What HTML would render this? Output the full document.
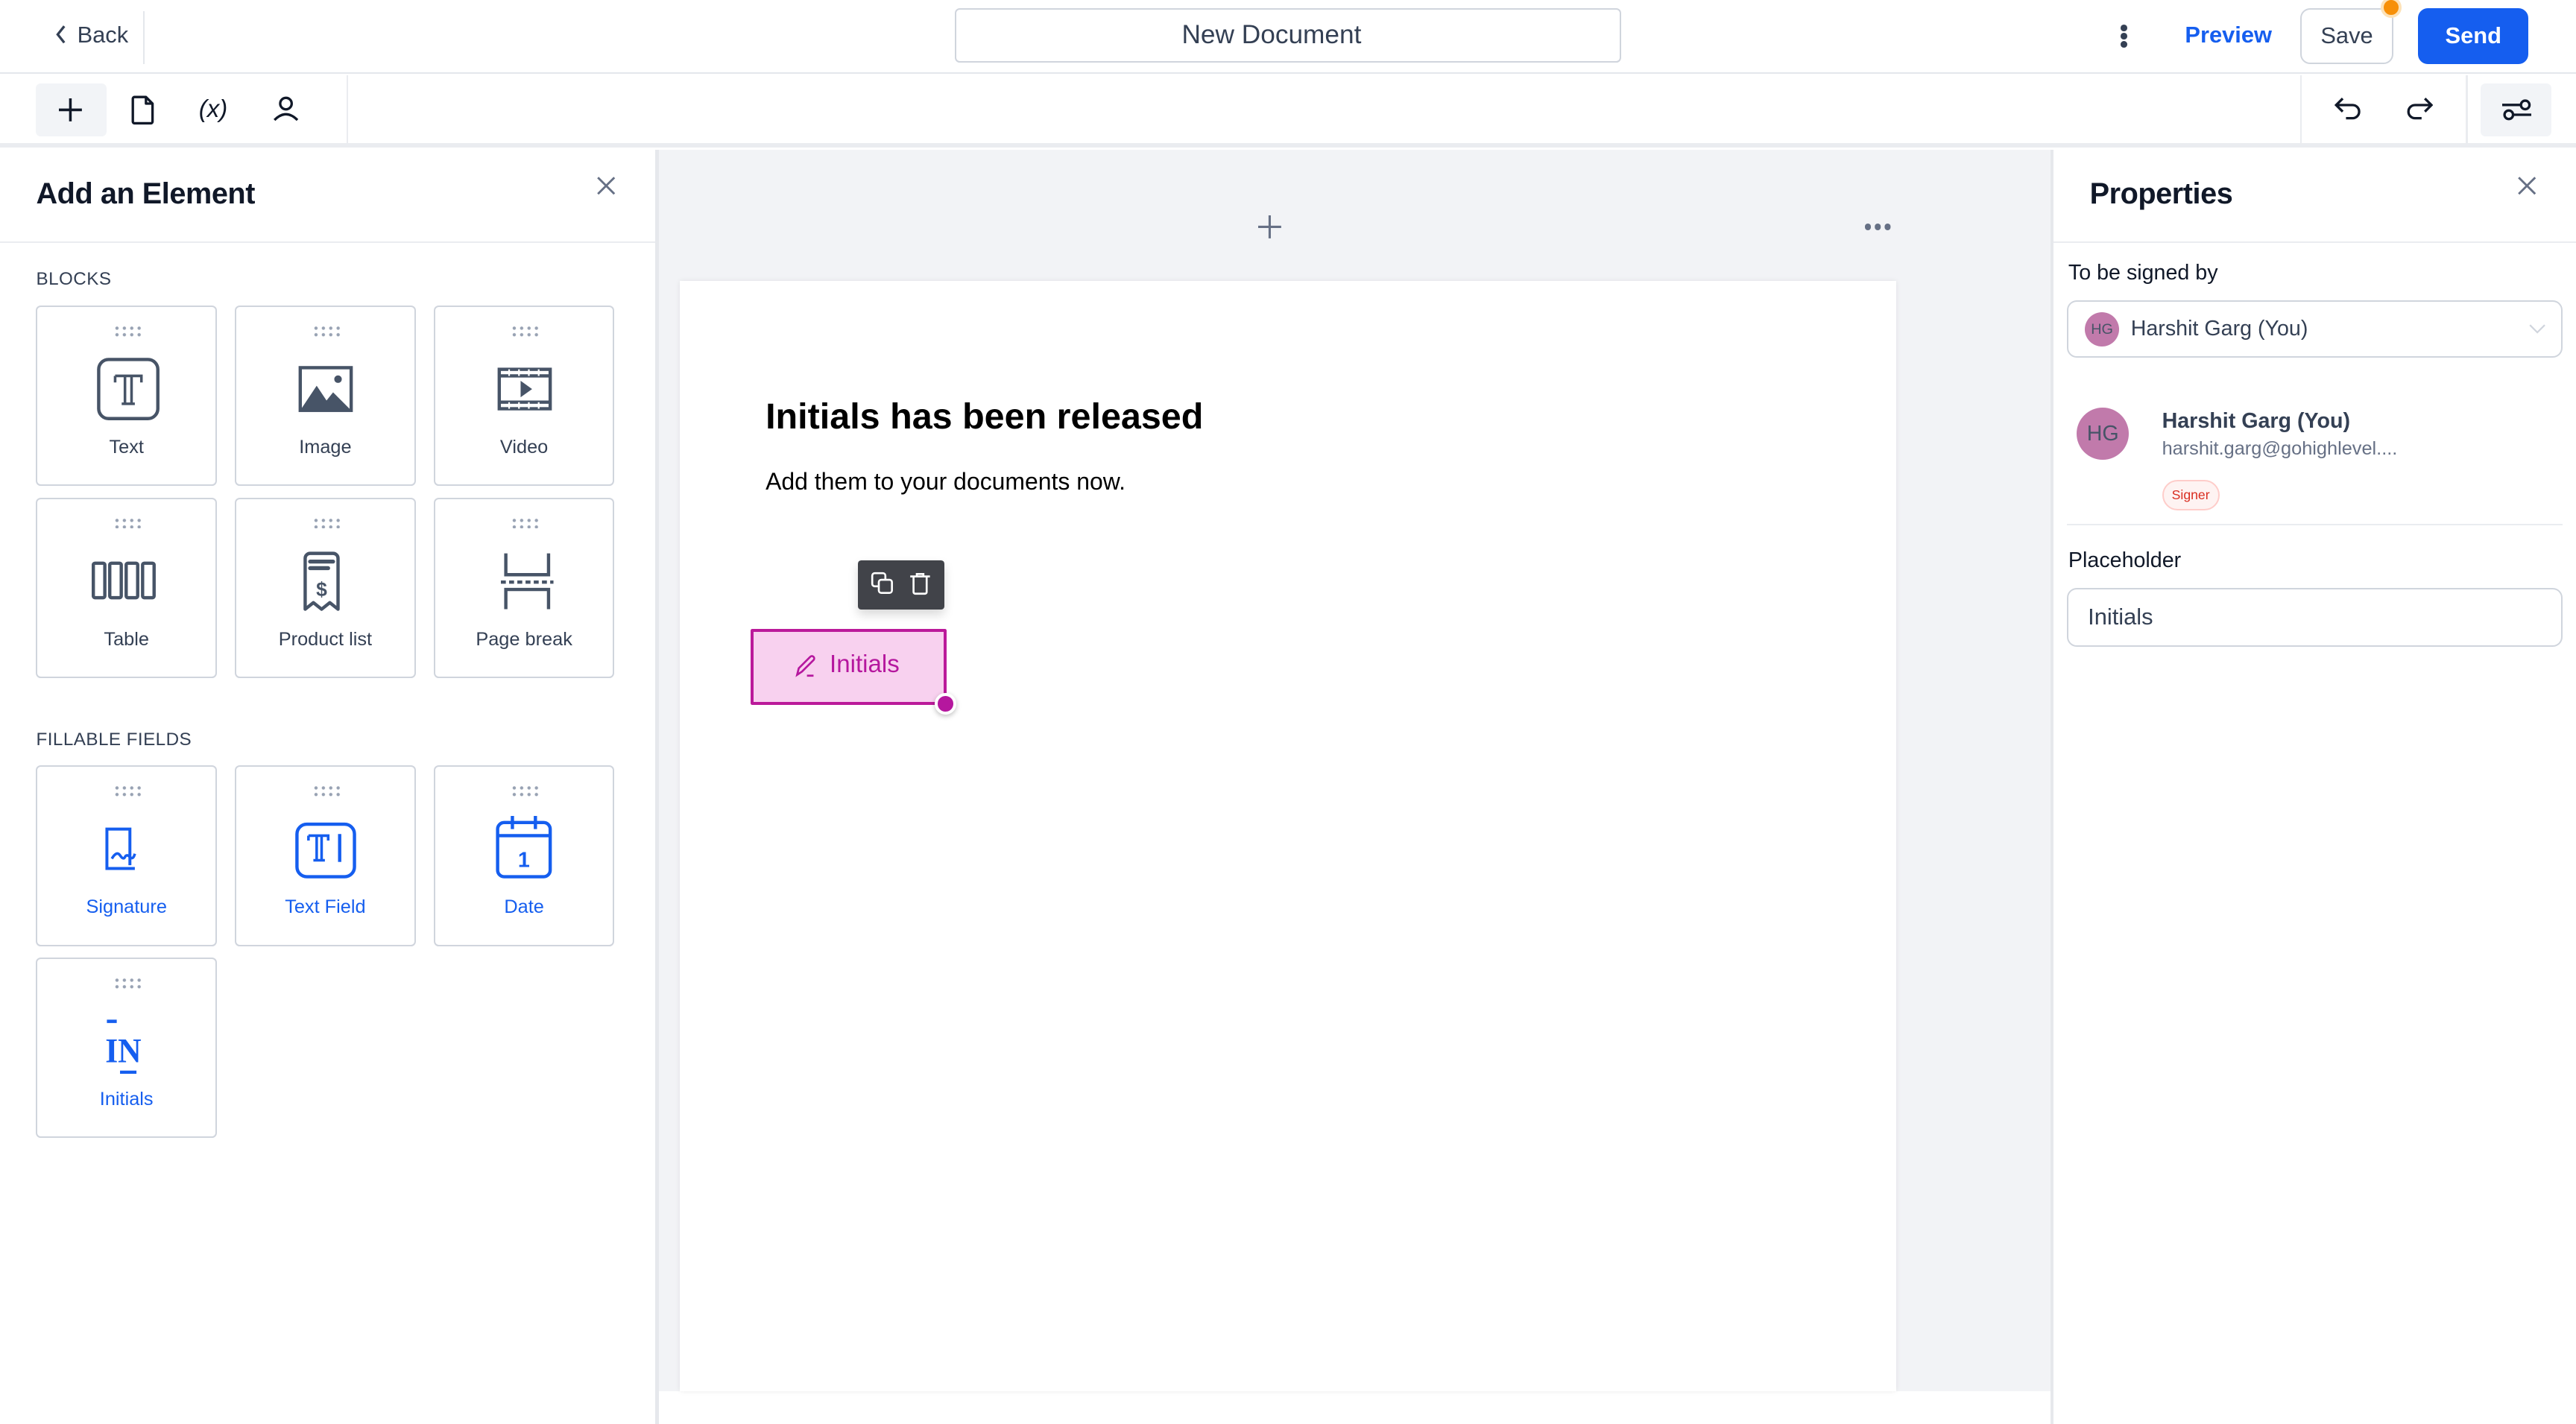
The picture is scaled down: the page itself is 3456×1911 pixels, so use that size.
<!DOCTYPE html>
<html><head><meta charset="utf-8"><style>
*{box-sizing:border-box;margin:0;padding:0}
html,body{width:3456px;height:1910px;overflow:hidden;background:#fff}
#r{position:absolute;left:0;top:0;width:1568px;height:867px;zoom:2.20408;font-family:"Liberation Sans",sans-serif;color:#101828}
.a{position:absolute}
.card{position:absolute;width:110px;height:110px;border:1px solid #d0d5dd;border-radius:3px;background:#fff}
.card .dots{position:absolute;left:46px;top:11px;width:18px;height:7px;background-image:radial-gradient(circle,#98a2b3 0.9px,transparent 1.1px);background-size:4.5px 4px}
.card .lb{position:absolute;left:0;right:0;top:79px;text-align:center;font-size:11.5px;color:#344054}
.card.f .lb{color:#155eef}
.card svg{position:absolute;left:35px;top:30px}
.lbl{font-size:11px;color:#344054;letter-spacing:.2px}
</style></head><body><div id="r">
<div class="a" style="left:0;top:0;width:1568px;height:45px;border-bottom:1px solid #e4e7ec"></div>
<svg class="a" style="left:33px;top:15px" width="8" height="12" viewBox="0 0 8 12"><path d="M6 1L2 6l4 5" fill="none" stroke="#344054" stroke-width="1.5"/></svg>
<div class="a" style="left:47px;top:13px;font-size:14px;color:#344054">Back</div>
<div class="a" style="left:87px;top:7px;width:1px;height:32px;background:#e4e7ec"></div>
<div class="a" style="left:581px;top:5px;width:406px;height:33px;border:1px solid #d0d5dd;border-radius:3px;text-align:center;line-height:31px;font-size:16px;color:#344054;padding-right:20px">New Document</div>
<div class="a" style="left:1291px;top:15px;width:4px;height:4px;border-radius:2px;background:#344054;box-shadow:0 5px 0 #344054,0 10px 0 #344054"></div>
<div class="a" style="left:1330px;top:13px;font-size:14px;font-weight:bold;color:#155eef">Preview</div>
<div class="a" style="left:1400px;top:5px;width:57px;height:34px;border:1px solid #d0d5dd;border-radius:6px;text-align:center;line-height:32px;font-size:14px;color:#344054">Save</div>
<div class="a" style="left:1449px;top:-2px;width:13px;height:13px;border-radius:50%;background:#f79009;border:2px solid #fde2b8"></div>
<div class="a" style="left:1472px;top:5px;width:67px;height:34px;border-radius:6px;background:#155eef;text-align:center;line-height:34px;font-size:14px;font-weight:bold;color:#fff">Send</div>
<div class="a" style="left:0;top:46px;width:1568px;height:44px;border-bottom:3px solid #eaecf0"></div>
<div class="a" style="left:22px;top:51px;width:43px;height:32px;border-radius:3px;background:#f2f4f7"></div>
<svg class="a" style="left:36px;top:60px" width="14" height="14"><path d="M7 0v14M0 7h14" stroke="#101828" stroke-width="1.6"/></svg>
<svg class="a" style="left:80px;top:58px" width="14" height="18" viewBox="0 0 14 18"><path d="M2 1h7l4 4v11a1 1 0 0 1-1 1H2a1 1 0 0 1-1-1V2a1 1 0 0 1 1-1zM9 1v4h4" fill="none" stroke="#101828" stroke-width="1.5" stroke-linejoin="round"/></svg>
<div class="a" style="left:121px;top:58px;font-size:15px;font-style:italic;color:#101828">(x)</div>
<svg class="a" style="left:166px;top:58px" width="16" height="16" viewBox="0 0 16 16"><circle cx="8" cy="5" r="3.5" fill="none" stroke="#101828" stroke-width="1.5"/><path d="M1 15q7-7 14 0" fill="none" stroke="#101828" stroke-width="1.5"/></svg>
<div class="a" style="left:211px;top:46px;width:1px;height:44px;background:#eaecf0"></div>
<div class="a" style="left:1400px;top:46px;width:1px;height:44px;background:#eaecf0"></div>
<div class="a" style="left:1501px;top:46px;width:1px;height:44px;background:#eaecf0"></div>
<svg class="a" style="left:1421px;top:59px" width="16" height="14" viewBox="0 0 16 14"><path d="M5 1L1 5l4 4M1 5h10a4 4 0 0 1 0 8H7" fill="none" stroke="#101828" stroke-width="1.5"/></svg>
<svg class="a" style="left:1465px;top:59px" width="16" height="14" viewBox="0 0 16 14"><path d="M11 1l4 4-4 4M15 5H5a4 4 0 0 0 0 8h4" fill="none" stroke="#101828" stroke-width="1.5"/></svg>
<div class="a" style="left:1510px;top:51px;width:43px;height:32px;border-radius:3px;background:#f2f4f7"></div>
<svg class="a" style="left:1523px;top:60px" width="18" height="14" viewBox="0 0 18 14"><path d="M0 4h12M6 10h12" stroke="#101828" stroke-width="1.5"/><circle cx="14" cy="4" r="2.6" fill="#f2f4f7" stroke="#101828" stroke-width="1.5"/><circle cx="4" cy="10" r="2.6" fill="#f2f4f7" stroke="#101828" stroke-width="1.5"/></svg>
<div class="a" style="left:400px;top:91px;width:850px;height:756px;background:#f2f3f6"></div>
<div class="a" style="left:399px;top:91px;width:2px;height:776px;background:#e6e8ec"></div>
<div class="a" style="left:1248px;top:91px;width:2px;height:776px;background:#e6e8ec"></div>
<svg class="a" style="left:766px;top:131px" width="14" height="14"><path d="M7 0v14M0 7h14" stroke="#667085" stroke-width="1.4"/></svg>
<div class="a" style="left:1135px;top:136px;width:4px;height:4px;border-radius:2px;background:#667085;box-shadow:6px 0 0 #667085,12px 0 0 #667085"></div>
<div class="a" style="left:414px;top:171px;width:740px;height:676px;background:#fff;box-shadow:0 0 3px rgba(0,0,0,.08)"></div>
<div class="a" style="left:466px;top:241px;font-size:22px;font-weight:bold;color:#000">Initials has been released</div>
<div class="a" style="left:466px;top:285px;font-size:14.5px;color:#000">Add them to your documents now.</div>
<div class="a" style="left:522px;top:341px;width:53px;height:30px;border-radius:2px;background:#414349;box-shadow:0 3px 6px rgba(0,0,0,.15)"></div>
<svg class="a" style="left:530px;top:348px" width="15" height="15" viewBox="0 0 15 15"><rect x="1" y="1" width="8" height="8" rx="1.5" fill="none" stroke="#fff" stroke-width="1.2"/><rect x="5" y="5" width="8" height="8" rx="1.5" fill="#414349" stroke="#fff" stroke-width="1.2"/></svg>
<svg class="a" style="left:553px;top:348px" width="14" height="15" viewBox="0 0 14 15"><path d="M1 3h12M5 3V1.5h4V3M3 3v9.5a1 1 0 0 0 1 1h6a1 1 0 0 0 1-1V3" fill="none" stroke="#fff" stroke-width="1.2"/></svg>
<div class="a" style="left:457px;top:383px;width:119px;height:46px;background:#f8d1ef;border:2px solid #bb1a9a;border-radius:1px"></div>
<svg class="a" style="left:483px;top:398px" width="15" height="15" viewBox="0 0 15 15"><path d="M2 13l1-4 7-7a1.4 1.4 0 0 1 2 2l-7 7zM8 13.5h4" fill="none" stroke="#b5179e" stroke-width="1.2"/></svg>
<div class="a" style="left:505px;top:396px;font-size:15px;color:#b5179e">Initials</div>
<div class="a" style="left:569px;top:422px;width:13px;height:13px;border-radius:50%;background:#b5179e;border:2px solid #fff;box-shadow:0 1px 3px rgba(0,0,0,.25)"></div>
<div class="a" style="left:22px;top:108px;font-size:18px;font-weight:bold;color:#101828;letter-spacing:-.2px">Add an Element</div>
<svg class="a" style="left:363px;top:107px" width="12" height="12"><path d="M1 1l10 10M11 1L1 11" stroke="#667085" stroke-width="1.3"/></svg>
<div class="a" style="left:0;top:147px;width:399px;height:1px;background:#eaecf0"></div>
<div class="a lbl" style="left:22px;top:164px">BLOCKS</div>
<div class="card" style="left:22px;top:186px"><div class="dots"></div><svg width="40" height="40" viewBox="0 0 40 40"><rect x="2" y="2" width="36" height="36" rx="6" fill="none" stroke="#475467" stroke-width="2"/><path d="M12 12h16v4M12 12v4M18 12v17M22 12v17M16 29h8" fill="none" stroke="#475467" stroke-width="1.6"/></svg><div class="lb">Text</div></div>
<div class="card" style="left:143px;top:186px"><div class="dots"></div><svg width="40" height="40" viewBox="0 0 40 40"><rect x="4" y="7" width="31" height="26" fill="none" stroke="#475467" stroke-width="2"/><path d="M4 33l10-15 6 9 4-5 11 11z" fill="#475467"/><circle cx="27" cy="14" r="2.3" fill="#475467"/></svg><div class="lb">Image</div></div>
<div class="card" style="left:264px;top:186px"><div class="dots"></div><svg width="40" height="40" viewBox="0 0 40 40"><rect x="4" y="8" width="31" height="24" fill="none" stroke="#475467" stroke-width="2"/><path d="M4 12h31M4 28h31" stroke="#475467" stroke-width="2"/><path d="M10 8v4M16 8v4M22 8v4M28 8v4M10 28v4M16 28v4M22 28v4M28 28v4" stroke="#fff" stroke-width="1"/><path d="M17 15v10l7-5z" fill="#475467"/></svg><div class="lb">Video</div></div>
<div class="card" style="left:22px;top:303px"><div class="dots"></div><svg width="40" height="40" viewBox="0 0 40 40" style="left:33px"><g fill="none" stroke="#475467" stroke-width="2"><rect x="1" y="9" width="7" height="21" rx="1"/><rect x="11" y="9" width="7" height="21" rx="1"/><rect x="21" y="9" width="7" height="21" rx="1"/><rect x="31" y="9" width="7" height="21" rx="1"/></g></svg><div class="lb">Table</div></div>
<div class="card" style="left:143px;top:303px"><div class="dots"></div><svg width="40" height="40" viewBox="0 0 40 40"><path d="M7 37V6a3 3 0 0 1 3-3h14a3 3 0 0 1 3 3v31l-5-4-5 4-5-4z" fill="none" stroke="#475467" stroke-width="2" stroke-linejoin="round"/><path d="M10 8h14M10 12h11" stroke="#475467" stroke-width="2.4" stroke-linecap="round"/><text x="17" y="29" font-size="12" font-weight="bold" text-anchor="middle" fill="#475467" font-family="Liberation Sans">$</text></svg><div class="lb">Product list</div></div>
<div class="card" style="left:264px;top:303px"><div class="dots"></div><svg width="40" height="40" viewBox="0 0 40 40"><path d="M8 3v13h26V3M8 37V25h26v12" fill="none" stroke="#475467" stroke-width="2"/><path d="M5 20.5h32" stroke="#475467" stroke-width="2" stroke-dasharray="3 2"/></svg><div class="lb">Page break</div></div>
<div class="a lbl" style="left:22px;top:444px">FILLABLE FIELDS</div>
<div class="card f" style="left:22px;top:466px"><div class="dots"></div><svg width="40" height="40" viewBox="0 0 40 40"><path d="M24 32H7V8h14v22" fill="none" stroke="#155eef" stroke-width="1.8"/><path d="M10 26q3-5 5-2t3 1 3 0 3-2" fill="none" stroke="#155eef" stroke-width="1.6"/></svg><div class="lb">Signature</div></div>
<div class="card f" style="left:143px;top:466px"><div class="dots"></div><svg width="40" height="40" viewBox="0 0 40 40"><rect x="2" y="5" width="35" height="32" rx="6" fill="none" stroke="#155eef" stroke-width="2"/><path d="M9 12h12v3M9 12v3M14 12v15M17 12v15M12 27h7" fill="none" stroke="#155eef" stroke-width="1.6"/><path d="M28 11v17" stroke="#155eef" stroke-width="2"/></svg><div class="lb">Text Field</div></div>
<div class="card f" style="left:264px;top:466px"><div class="dots"></div><svg width="40" height="40" viewBox="0 0 40 40"><rect x="3" y="4" width="32" height="33" rx="4" fill="none" stroke="#155eef" stroke-width="2"/><path d="M3 12h32M12 0v8M26 0v8" stroke="#155eef" stroke-width="2"/><text x="19" y="31" font-size="13" font-weight="bold" text-anchor="middle" fill="#155eef" font-family="Liberation Sans">1</text></svg><div class="lb">Date</div></div>
<div class="card f" style="left:22px;top:583px"><div class="dots"></div><svg width="40" height="40" viewBox="0 0 40 40" style="left:40px"><path d="M2 8h6M10 39h10" stroke="#155eef" stroke-width="2"/><text x="1" y="33" font-size="21" font-weight="bold" fill="#155eef" font-family="Liberation Serif" textLength="22" lengthAdjust="spacingAndGlyphs">IN</text></svg><div class="lb">Initials</div></div>
<div class="a" style="left:1272px;top:108px;font-size:18px;font-weight:bold;color:#101828;letter-spacing:-.2px">Properties</div>
<svg class="a" style="left:1532px;top:107px" width="12" height="12"><path d="M1 1l10 10M11 1L1 11" stroke="#667085" stroke-width="1.3"/></svg>
<div class="a" style="left:1250px;top:147px;width:318px;height:1px;background:#eaecf0"></div>
<div class="a" style="left:1259px;top:159px;font-size:13px;color:#101828">To be signed by</div>
<div class="a" style="left:1258px;top:183px;width:302px;height:35px;border:1px solid #d0d5dd;border-radius:6px"></div>
<div class="a" style="left:1269px;top:190px;width:21px;height:21px;border-radius:50%;background:#c17aab;font-size:9px;color:#475467;text-align:center;line-height:21px">HG</div>
<div class="a" style="left:1297px;top:193px;font-size:13px;color:#344054">Harshit Garg (You)</div>
<svg class="a" style="left:1539px;top:197px" width="11" height="7"><path d="M1 1l4.5 4.5L10 1" fill="none" stroke="#d0d5dd" stroke-width="1"/></svg>
<div class="a" style="left:1264px;top:248px;width:32px;height:32px;border-radius:50%;background:#c17aab;font-size:13px;color:#475467;text-align:center;line-height:32px">HG</div>
<div class="a" style="left:1316px;top:249px;font-size:13px;font-weight:bold;color:#344054">Harshit Garg (You)</div>
<div class="a" style="left:1316px;top:267px;font-size:11.5px;color:#667085">harshit.garg@gohighlevel....</div>
<div class="a" style="left:1316px;top:292px;width:35px;height:19px;border:1px solid #fecdca;border-radius:10px;background:#fef3f2;font-size:8px;color:#d92d20;text-align:center;line-height:17px">Signer</div>
<div class="a" style="left:1258px;top:319px;width:302px;height:1px;background:#eaecf0"></div>
<div class="a" style="left:1259px;top:334px;font-size:13px;color:#101828">Placeholder</div>
<div class="a" style="left:1258px;top:358px;width:302px;height:36px;border:1px solid #d0d5dd;border-radius:6px;padding-left:12px;line-height:34px;font-size:14px;color:#344054">Initials</div>
</div></body></html>
